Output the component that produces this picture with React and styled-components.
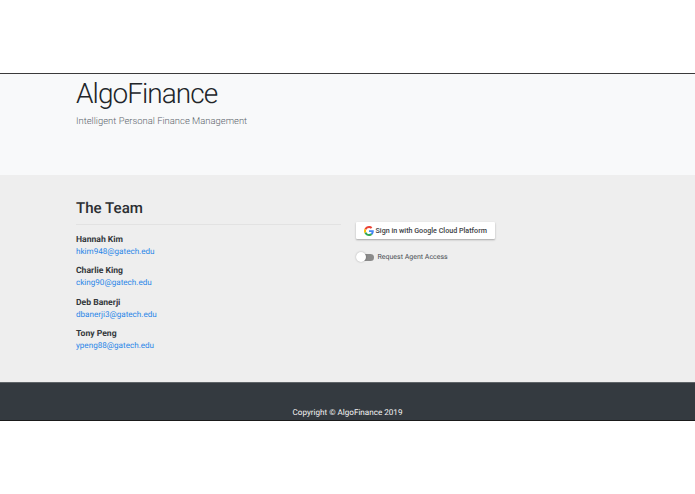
import React from "react";
import styled, { createGlobalStyle } from "styled-components";

const Global = createGlobalStyle`
  html, body { margin: 0; padding: 0; background: #fff; }
  body { font-family: Roboto, "Liberation Sans", sans-serif; text-rendering: geometricPrecision; }
  a { text-decoration: none; }
`;

const Page = styled.div`
  width: 695px;
  height: 494px;
  overflow: hidden;
  padding-top: 73px;
  box-sizing: border-box;
`;

const Frame = styled.div`
  border-top: 1px solid #3a3a3a;
  border-bottom: 1px solid #1a1a1a;
  display: flex;
  flex-direction: column;
`;

const Hero = styled.header`
  height: 101px;
  box-sizing: border-box;
  background: #f8f9fa;
  padding: 2px 0 0 76px;
`;

const Title = styled.h1`
  margin: 0;
  font-weight: 300;
  font-size: 28px;
  line-height: 35px;
  letter-spacing: -0.95px;
  color: #212529;
`;

const Tagline = styled.p`
  margin: 3.5px 0 0;
  font-weight: 300;
  font-size: 9.45px;
  line-height: 14px;
  color: #5f676e;
`;

const Main = styled.main`
  height: 207px;
  box-sizing: border-box;
  background: #eeeeee;
  padding: 23px 0 0 76px;
  display: flex;
`;

const TeamColumn = styled.section`
  width: 265px;
`;

const Heading = styled.h2`
  margin: 0;
  padding-bottom: 6px;
  font-weight: 500;
  font-size: 15.1px;
  line-height: 20px;
  color: #2b2e32;
  border-bottom: 1px solid #e2e2e2;
`;

const Members = styled.ul`
  list-style: none;
  margin: 9px 0 0;
  padding: 0;
  display: flex;
  flex-direction: column;
  gap: 8.4px;
`;

const Member = styled.li`
  display: flex;
  flex-direction: column;
  gap: 0;
`;

const Name = styled.strong`
  font-size: 8.6px;
  line-height: 12px;
  font-weight: 700;
  color: #34383c;
`;

const Email = styled.a`
  margin-top: -1px;
  font-size: 8.1px;
  line-height: 12px;
  color: #2a86e8;
`;

const AccessColumn = styled.section`
  margin-left: 15px;
  padding-top: 24px;
  display: flex;
  flex-direction: column;
  align-items: flex-start;
`;

const GoogleButton = styled.button`
  width: 139px;
  height: 17px;
  border: none;
  border-radius: 1px;
  background: #fff;
  box-shadow: 0 1px 2px rgba(0, 0, 0, 0.3);
  display: flex;
  align-items: center;
  gap: 1.5px;
  padding: 0 0 0 8px;
  font-family: inherit;
  font-weight: 500;
  font-size: 7.15px;
  color: #3c4043;
  white-space: nowrap;
`;

const Toggle = styled.label`
  margin-top: 12px;
  display: flex;
  align-items: center;
  gap: 3.5px;
  font-size: 7px;
  line-height: 12px;
  color: #4a4f54;
`;

const Track = styled.span`
  position: relative;
  width: 17px;
  height: 7px;
  margin-left: 1px;
  border-radius: 3.5px;
  background: #8b8b8b;
`;

const Thumb = styled.span`
  position: absolute;
  left: -1px;
  top: -1.5px;
  width: 10px;
  height: 10px;
  border-radius: 50%;
  background: #fff;
  box-shadow: 0 0 2px rgba(0, 0, 0, 0.3);
`;

const Footer = styled.footer`
  height: 38px;
  box-sizing: border-box;
  background: #343a40;
  padding-top: 22.5px;
  text-align: center;
  font-size: 8.1px;
  line-height: 13px;
  color: #f4f4f4;
  border-top: 1px solid #5f6468;
`;

const GoogleIcon = () => (
  <svg width="10" height="10" viewBox="0 0 48 48" aria-hidden="true">
    <path fill="#EA4335" d="M24 9.5c3.5 0 6.7 1.2 9.2 3.6l6.9-6.9C35.9 2.4 30.4 0 24 0 14.6 0 6.5 5.4 2.6 13.2l8 6.2C12.5 13.6 17.8 9.5 24 9.5z" />
    <path fill="#4285F4" d="M47 24.5c0-1.6-.2-3.1-.4-4.5H24v9h12.9c-.6 3-2.2 5.5-4.7 7.2l7.7 6C44.4 37.5 47 31.6 47 24.5z" />
    <path fill="#FBBC05" d="M10.5 28.6c-.5-1.4-.8-3-.8-4.6s.3-3.2.8-4.6l-8-6.2C.9 16.5 0 20.1 0 24s.9 7.5 2.6 10.8l7.9-6.2z" />
    <path fill="#34A853" d="M24 48c6.5 0 11.9-2.1 15.9-5.8l-7.7-6c-2.1 1.4-4.9 2.3-8.2 2.3-6.2 0-11.5-4.2-13.4-9.8l-8 6.2C6.5 42.6 14.6 48 24 48z" />
  </svg>
);

const team = [
  { name: "Hannah Kim", email: "hkim948@gatech.edu" },
  { name: "Charlie King", email: "cking90@gatech.edu" },
  { name: "Deb Banerji", email: "dbanerji3@gatech.edu" },
  { name: "Tony Peng", email: "ypeng88@gatech.edu" },
];

export default function App() {
  return (
    <Page>
      <Global />
      <Frame>
        <Hero>
          <Title>AlgoFinance</Title>
          <Tagline>Intelligent Personal Finance Management</Tagline>
        </Hero>
        <Main>
          <TeamColumn>
            <Heading>The Team</Heading>
            <Members>
              {team.map((m) => (
                <Member key={m.email}>
                  <Name>{m.name}</Name>
                  <Email href={`mailto:${m.email}`}>{m.email}</Email>
                </Member>
              ))}
            </Members>
          </TeamColumn>
          <AccessColumn>
            <GoogleButton>
              <GoogleIcon />
              Sign in with Google Cloud Platform
            </GoogleButton>
            <Toggle>
              <Track>
                <Thumb />
              </Track>
              Request Agent Access
            </Toggle>
          </AccessColumn>
        </Main>
        <Footer>Copyright © AlgoFinance 2019</Footer>
      </Frame>
    </Page>
  );
}
